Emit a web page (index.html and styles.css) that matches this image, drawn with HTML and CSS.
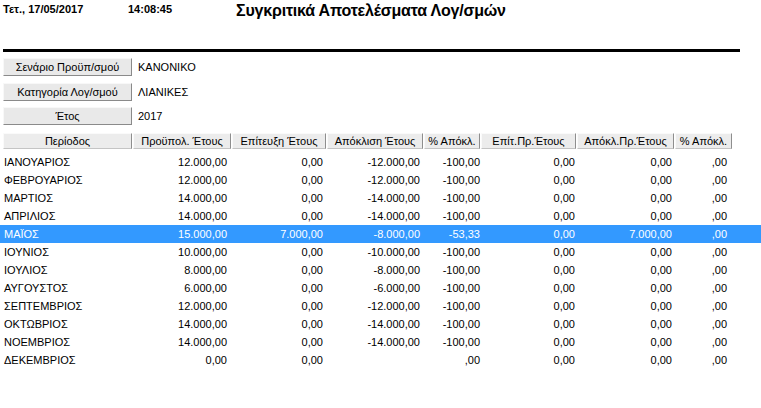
FILE: index.html
```html
<!DOCTYPE html>
<html lang="el">
<head>
<meta charset="utf-8">
<title>Συγκριτικά Αποτελέσματα Λογ/σμών</title>
<link rel="stylesheet" href="styles.css">
</head>
<body>
<header class="top">
  <span class="date">Τετ., 17/05/2017</span>
  <span class="time">14:08:45</span>
  <h1 class="title">Συγκριτικά Αποτελέσματα Λογ/σμών</h1>
</header>
<div class="rule"></div>

<section class="params">
  <button class="btn">Σενάριο Προϋπ/σμού</button><span class="val">ΚΑΝΟΝΙΚΟ</span>
  <button class="btn">Κατηγορία Λογ/σμού</button><span class="val">ΛΙΑΝΙΚΕΣ</span>
  <button class="btn">Έτος</button><span class="val">2017</span>
</section>

<section class="table">
  <div class="thead">
    <div class="th">Περίοδος</div>
    <div class="th">Προϋπολ. Έτους</div>
    <div class="th">Επίτευξη Έτους</div>
    <div class="th">Απόκλιση Έτους</div>
    <div class="th">% Απόκλ.</div>
    <div class="th">Επίτ.Πρ.Έτους</div>
    <div class="th">Απόκλ.Πρ.Έτους</div>
    <div class="th">% Απόκλ.</div>
  </div>
  <div class="rows">
    <div class="row"><span>ΙΑΝΟΥΑΡΙΟΣ</span><span>12.000,00</span><span>0,00</span><span>-12.000,00</span><span>-100,00</span><span>0,00</span><span>0,00</span><span>,00</span></div>
    <div class="row"><span>ΦΕΒΡΟΥΑΡΙΟΣ</span><span>12.000,00</span><span>0,00</span><span>-12.000,00</span><span>-100,00</span><span>0,00</span><span>0,00</span><span>,00</span></div>
    <div class="row"><span>ΜΑΡΤΙΟΣ</span><span>14.000,00</span><span>0,00</span><span>-14.000,00</span><span>-100,00</span><span>0,00</span><span>0,00</span><span>,00</span></div>
    <div class="row"><span>ΑΠΡΙΛΙΟΣ</span><span>14.000,00</span><span>0,00</span><span>-14.000,00</span><span>-100,00</span><span>0,00</span><span>0,00</span><span>,00</span></div>
    <div class="row selected"><span>ΜΑΪΟΣ</span><span>15.000,00</span><span>7.000,00</span><span>-8.000,00</span><span>-53,33</span><span>0,00</span><span>7.000,00</span><span>,00</span></div>
    <div class="row"><span>ΙΟΥΝΙΟΣ</span><span>10.000,00</span><span>0,00</span><span>-10.000,00</span><span>-100,00</span><span>0,00</span><span>0,00</span><span>,00</span></div>
    <div class="row"><span>ΙΟΥΛΙΟΣ</span><span>8.000,00</span><span>0,00</span><span>-8.000,00</span><span>-100,00</span><span>0,00</span><span>0,00</span><span>,00</span></div>
    <div class="row"><span>ΑΥΓΟΥΣΤΟΣ</span><span>6.000,00</span><span>0,00</span><span>-6.000,00</span><span>-100,00</span><span>0,00</span><span>0,00</span><span>,00</span></div>
    <div class="row"><span>ΣΕΠΤΕΜΒΡΙΟΣ</span><span>12.000,00</span><span>0,00</span><span>-12.000,00</span><span>-100,00</span><span>0,00</span><span>0,00</span><span>,00</span></div>
    <div class="row"><span>ΟΚΤΩΒΡΙΟΣ</span><span>14.000,00</span><span>0,00</span><span>-14.000,00</span><span>-100,00</span><span>0,00</span><span>0,00</span><span>,00</span></div>
    <div class="row"><span>ΝΟΕΜΒΡΙΟΣ</span><span>14.000,00</span><span>0,00</span><span>-14.000,00</span><span>-100,00</span><span>0,00</span><span>0,00</span><span>,00</span></div>
    <div class="row"><span>ΔΕΚΕΜΒΡΙΟΣ</span><span>0,00</span><span>0,00</span><span></span><span>,00</span><span>0,00</span><span>0,00</span><span>,00</span></div>
  </div>
</section>
</body>
</html>
```
FILE: styles.css
```css
html, body {
  margin: 0;
  padding: 0;
  background: #fff;
}
body {
  width: 761px;
  height: 408px;
  overflow: hidden;
  font-family: "Liberation Sans", Arial, sans-serif;
  font-size: 11px;
  color: #000;
}

.top {
  display: flex;
  align-items: flex-start;
  height: 49px;
  padding-left: 3px;
  box-sizing: border-box;
}
.date, .time {
  font-weight: bold;
  font-size: 11px;
  line-height: 14px;
  margin-top: 2px;
}
.date { width: 125px; }
.time { width: 108px; }
.title {
  margin: 1px 0 0 0;
  font-size: 16px;
  letter-spacing: -0.2px;
  line-height: 20px;
  font-weight: bold;
}

.rule {
  margin-left: 3px;
  width: 737px;
  height: 3px;
  background: #000;
}

.params {
  margin-top: 6px;
  padding-left: 3px;
  display: grid;
  grid-template-columns: 129px auto;
  grid-auto-rows: 18px;
  row-gap: 6.5px;
  align-items: center;
}
.btn {
  height: 18px;
  width: 129px;
  padding: 0;
  margin: 0;
  font-family: inherit;
  font-size: 11px;
  color: #000;
  background: #e9e9e9;
  border: 1px solid;
  border-color: #f8f8f8 #8a8a8a #8a8a8a #f8f8f8;
  text-align: center;
}
.val {
  padding-left: 6px;
  line-height: 18px;
}

.table { margin-top: 8px; }
.thead {
  display: grid;
  grid-template-columns: 129px 98px 94px 96px 56px 95px 97px 57px;
  column-gap: 1px;
  padding-left: 3px;
  height: 16px;
}
.th {
  box-sizing: border-box;
  height: 16px;
  line-height: 14px;
  text-align: center;
  background: #ececec;
  border: 1px solid;
  border-color: #fafafa #8e8e8e #c4c4c4 #fafafa;
  white-space: nowrap;
  overflow: hidden;
}

.rows { margin-top: 4px; }
.row {
  display: grid;
  grid-template-columns: 130px 94px 96px 97px 60px 95px 97px 55px;
  padding-left: 3px;
  height: 18px;
  line-height: 18px;
  white-space: nowrap;
}
.row span { text-align: right; }
.row span:first-child {
  text-align: left;
  padding-left: 1px;
}
.row.selected {
  background: #3399ff;
  color: #fff;
}
```
